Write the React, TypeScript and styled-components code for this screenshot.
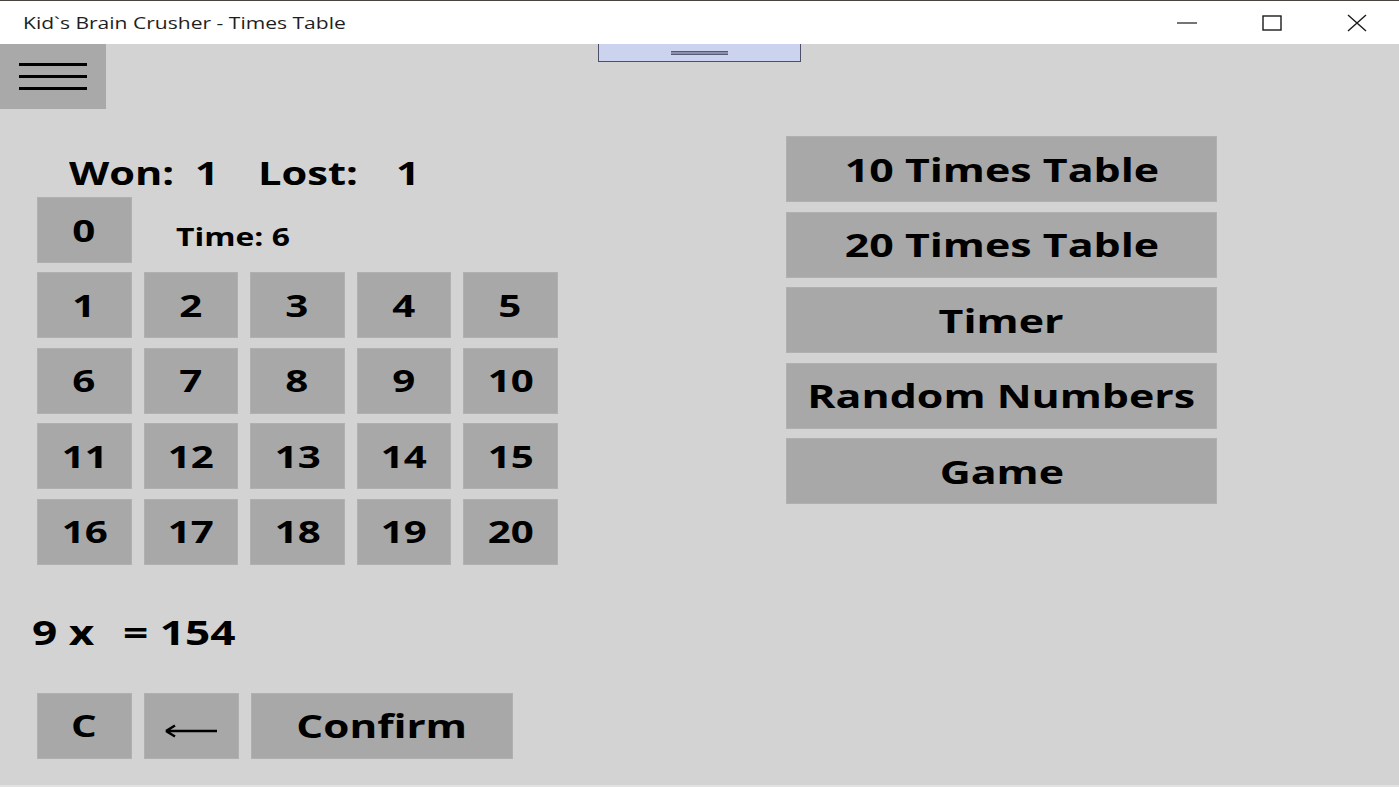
import React, { useState } from 'react'
import styled, { createGlobalStyle } from 'styled-components'

const GlobalStyle = createGlobalStyle`
  html, body {
    margin: 0;
    padding: 0;
    background: #d3d3d3;
    overflow: hidden;
  }
  * {
    box-sizing: border-box;
  }
`

const FONT = `'Open Sans', 'Noto Sans', 'Liberation Sans', sans-serif`

const Window = styled.div`
  display: flex;
  flex-direction: column;
  width: 1399px;
  height: 787px;
  font-family: ${FONT};
  color: #000;
`

const TitleBar = styled.div`
  display: flex;
  align-items: center;
  height: 44px;
  flex-shrink: 0;
  background: #fff;
  border-top: 1px solid #4a4440;
`

const TitleText = styled.div`
  flex: 1;
  padding-left: 23px;
  font-size: 16.2px;
  color: #1e1e1e;
  white-space: nowrap;
`

const WindowControls = styled.div`
  display: flex;
  height: 100%;
`

const ControlButton = styled.div`
  display: flex;
  align-items: center;
  justify-content: center;
  width: 85px;
  height: 100%;
  color: #1a1a1a;
`

// a span that widens glyphs the way the app's display font sits on screen
const Stretch = styled.span<{ $origin?: string }>`
  display: inline-block;
  transform: scaleX(1.3);
  transform-origin: ${(p) => p.$origin ?? 'center'};
  white-space: nowrap;
`

const Content = styled.div`
  position: relative;
  flex: 1;
  display: flex;
  flex-direction: column;
  background: #d3d3d3;
  border-bottom: 2px solid #e2e2e2;
`

const MenuButton = styled.div`
  display: flex;
  flex-direction: column;
  justify-content: center;
  gap: 9px;
  width: 106px;
  height: 65px;
  padding-left: 19px;
  background: #a9a9a9;
`

const MenuLine = styled.div`
  width: 68px;
  height: 3px;
  background: #000;
`

const DragHandle = styled.div`
  position: absolute;
  top: 0;
  left: 598px;
  width: 203px;
  height: 18px;
  display: flex;
  align-items: center;
  justify-content: center;
  background: #cbd3ef;
  border: 1px solid #4b5068;
  border-top: none;
`

const Grip = styled.div`
  width: 57px;
  height: 4px;
  background: #8a90aa;
  border-top: 1px solid #555b78;
  border-bottom: 1px solid #555b78;
`

const Main = styled.div`
  display: flex;
  flex: 1;
`

const LeftPanel = styled.div`
  display: flex;
  flex-direction: column;
  width: 786px;
  padding-left: 37px;
`

const ScoreRow = styled.div`
  display: flex;
  height: 88px;
  padding-top: 48px;
  font-size: 32px;
  font-weight: 700;
  line-height: 32px;
`

const ScoreItem = styled.div<{ $width: number; $indent?: number }>`
  width: ${(p) => p.$width}px;
  margin-left: ${(p) => p.$indent ?? 0}px;
`

const ZeroRow = styled.div`
  display: flex;
  align-items: center;
  height: 66px;
  margin-bottom: 9px;
`

const TimeText = styled.div`
  margin-left: 44px;
  padding-top: 13px;
  font-size: 24.5px;
  font-weight: 700;
  line-height: 24px;
`

const Keypad = styled.div`
  display: grid;
  grid-template-columns: repeat(5, 94.5px);
  grid-auto-rows: 66px;
  column-gap: 12px;
  row-gap: 9.6px;
`

const KeyButton = styled.div<{ $width?: number; $size?: number }>`
  display: flex;
  align-items: center;
  justify-content: center;
  width: ${(p) => (p.$width ? `${p.$width}px` : '100%')};
  height: 66px;
  background: #a8a8a8;
  border: 1px solid #b0b0b0;
  font-size: ${(p) => p.$size ?? 31}px;
  font-weight: 700;
  line-height: 1;
  cursor: pointer;
  user-select: none;
`

const Equation = styled.div`
  display: flex;
  margin-top: 51px;
  margin-left: -5px;
  height: 33px;
  font-size: 34px;
  font-weight: 700;
  line-height: 33px;
`

const EquationPart = styled.div<{ $width?: number }>`
  width: ${(p) => (p.$width ? `${p.$width}px` : 'auto')};
`

const ActionRow = styled.div`
  display: flex;
  gap: 12px;
  margin-top: 44px;
`

const RightPanel = styled.div`
  display: flex;
  flex-direction: column;
  gap: 9.5px;
  width: 431px;
  padding-top: 27px;
`

const ModeButton = styled.div`
  display: flex;
  align-items: center;
  justify-content: center;
  height: 66px;
  background: #a8a8a8;
  border: 1px solid #b0b0b0;
  font-size: 33px;
  font-weight: 700;
  line-height: 1;
  cursor: pointer;
`

const modes = ['10 Times Table', '20 Times Table', 'Timer', 'Random Numbers', 'Game']

const App: React.FC = () => {
  const [won] = useState(1)
  const [lost] = useState(1)
  const [time] = useState(6)
  const [answer, setAnswer] = useState('')

  const keys = Array.from({ length: 20 }, (_, i) => i + 1)

  return (
    <>
      <GlobalStyle />
      <Window>
        <TitleBar>
          <TitleText>
            <Stretch $origin="left">Kid`s Brain Crusher - Times Table</Stretch>
          </TitleText>
          <WindowControls>
            <ControlButton>
              <svg width="20" height="2" viewBox="0 0 20 2">
                <line x1="0" y1="1" x2="20" y2="1" stroke="currentColor" strokeWidth="1.2" />
              </svg>
            </ControlButton>
            <ControlButton>
              <svg width="20" height="16" viewBox="0 0 20 16">
                <rect x="1" y="1" width="18" height="14" fill="none" stroke="currentColor" strokeWidth="1.4" />
              </svg>
            </ControlButton>
            <ControlButton>
              <svg width="20" height="18" viewBox="0 0 20 18">
                <path d="M1 1 L19 17 M19 1 L1 17" stroke="currentColor" strokeWidth="1.4" />
              </svg>
            </ControlButton>
          </WindowControls>
        </TitleBar>

        <Content>
          <MenuButton>
            <MenuLine />
            <MenuLine />
            <MenuLine />
          </MenuButton>
          <DragHandle>
            <Grip />
          </DragHandle>

          <Main>
            <LeftPanel>
              <ScoreRow>
                <ScoreItem $width={126} $indent={32}>
                  <Stretch $origin="left">Won:</Stretch>
                </ScoreItem>
                <ScoreItem $width={63}>
                  <Stretch $origin="left">{won}</Stretch>
                </ScoreItem>
                <ScoreItem $width={138}>
                  <Stretch $origin="left">Lost:</Stretch>
                </ScoreItem>
                <ScoreItem $width={40}>
                  <Stretch $origin="left">{lost}</Stretch>
                </ScoreItem>
              </ScoreRow>

              <ZeroRow>
                <KeyButton $width={94.5} onClick={() => setAnswer(answer + '0')}>
                  <Stretch>0</Stretch>
                </KeyButton>
                <TimeText>
                  <Stretch $origin="left">Time: {time}</Stretch>
                </TimeText>
              </ZeroRow>

              <Keypad>
                {keys.map((k) => (
                  <KeyButton key={k} onClick={() => setAnswer(answer + k)}>
                    <Stretch>{k}</Stretch>
                  </KeyButton>
                ))}
              </Keypad>

              <Equation>
                <EquationPart $width={91}>
                  <Stretch $origin="left">9 x {answer}</Stretch>
                </EquationPart>
                <EquationPart>
                  <Stretch $origin="left">= 154</Stretch>
                </EquationPart>
              </Equation>

              <ActionRow>
                <KeyButton $width={94.5} onClick={() => setAnswer('')}>
                  <Stretch>C</Stretch>
                </KeyButton>
                <KeyButton $width={95} onClick={() => setAnswer(answer.slice(0, -1))}>
                  <svg width="54" height="14" viewBox="0 0 54 14" style={{ marginTop: 10 }}>
                    <path d="M2 7 H53 M2 7 L11 1.5 M2 7 L11 12.5" stroke="#000" strokeWidth="2.6" fill="none" />
                  </svg>
                </KeyButton>
                <KeyButton $width={262.5} $size={32.5}>
                  <Stretch>Confirm</Stretch>
                </KeyButton>
              </ActionRow>
            </LeftPanel>

            <RightPanel>
              {modes.map((m) => (
                <ModeButton key={m}>
                  <Stretch>{m}</Stretch>
                </ModeButton>
              ))}
            </RightPanel>
          </Main>
        </Content>
      </Window>
    </>
  )
}

export default App
